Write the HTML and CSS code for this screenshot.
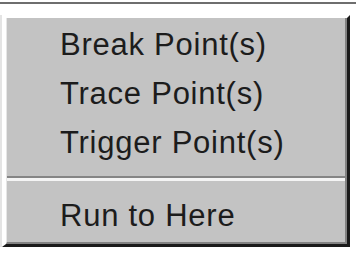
FILE: index.html
```html
<!DOCTYPE html>
<html>
<head>
<meta charset="utf-8">
<link rel="stylesheet" href="styles.css">
</head>
<body>
<div class="rule"></div>
<div class="menu">
  <div class="menu-inner">
    <div class="item">Break Point(s)</div>
    <div class="item">Trace Point(s)</div>
    <div class="item">Trigger Point(s)</div>
    <div class="sep"></div>
    <div class="item">Run to Here</div>
  </div>
</div>
</body>
</html>
```
FILE: styles.css
```css
html, body {
  margin: 0;
  padding: 0;
  background: #ffffff;
}
body {
  width: 356px;
  height: 254px;
  overflow: hidden;
  font-family: "Liberation Sans", Arial, sans-serif;
}
.rule {
  height: 2px;
  margin-top: 2px;
  background: #6e6e6e;
}
.menu {
  box-sizing: border-box;
  margin: 11px 0 0 2px;
  width: 348px;
  border-top: 3px solid #ffffff;
  border-left: 4px solid #ffffff;
  border-right: 3px solid #1a1a1a;
  border-bottom: 3px solid #1a1a1a;
  box-shadow: -2px 0 0 #e4e4e4;
}
.menu-inner {
  background: #c3c3c3;
  border-left: 1px solid #e6e6e6;
  border-right: 2px solid #828282;
  border-bottom: 2px solid #828282;
  padding: 2px 0 2px 0;
}
.item {
  height: 49px;
  line-height: 49px;
  font-size: 31px;
  letter-spacing: 0.75px;
  padding-left: 53px;
  color: #1c1c1c;
  white-space: nowrap;
}
.sep {
  margin: 9px 0 10px 0;
  border-top: 2px solid #858585;
  border-bottom: 3px solid #f4f4f4;
}
```
